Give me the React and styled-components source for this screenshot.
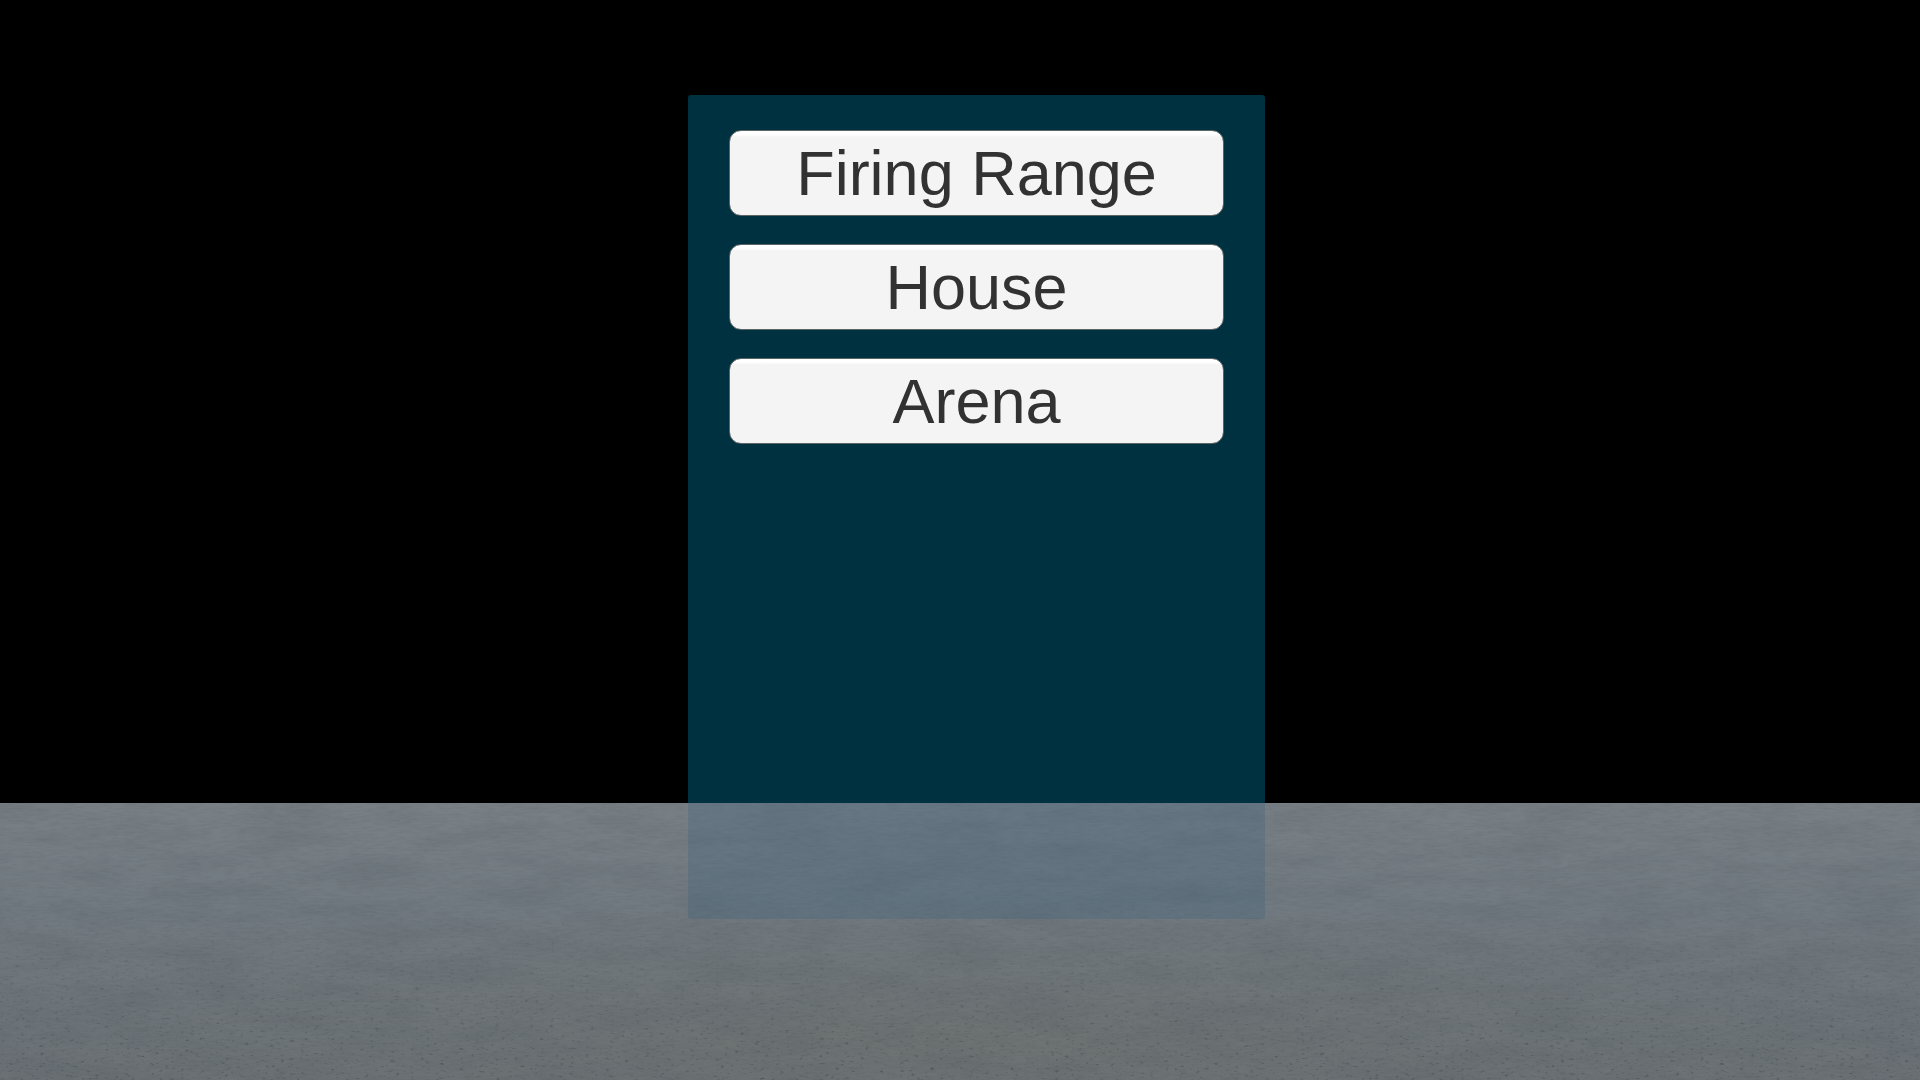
import React from "react";
import styled, { createGlobalStyle } from "styled-components";

const GlobalStyle = createGlobalStyle`
  body {
    margin: 0;
    background: #000;
  }
`;

/* Sky on the first row, ground on the second; the menu spans both. */
const Scene = styled.main`
  display: grid;
  grid-template-columns: 1fr;
  grid-template-rows: 803fr 277fr;
  height: 100vh;
  overflow: hidden;
  background: #000;
  font-family: "Liberation Sans", Arial, sans-serif;
`;

const Ground = styled.svg`
  grid-area: 2 / 1;
  display: block;
  width: 100%;
  height: 100%;
  min-height: 0;
`;

const Menu = styled.nav`
  grid-area: 1 / 1 / span 2;
  z-index: 1;
  justify-self: center;
  box-sizing: border-box;
  display: flex;
  flex-direction: column;
  gap: 28px;
  width: 577px;
  max-width: 100%;
  margin: 95px 0 161px 33px;
  padding: 35px 41px;
  border-radius: 3px;
  background: linear-gradient(
    #003140 calc(100% - 116px),
    rgba(60, 98, 124, 0.3) calc(100% - 116px)
  );
`;

const MapButton = styled.button`
  height: 86px;
  padding: 0;
  border: 1px solid #5c6464;
  border-radius: 12px;
  background: linear-gradient(#fff 3px, #f4f4f4 6px);
  color: #323232;
  font-family: inherit;
  font-size: 63px;
  line-height: 72px;
  text-align: center;
  cursor: pointer;
`;

const maps = ["Firing Range", "House", "Arena"];

function Asphalt() {
  return (
    <Ground aria-hidden="true">
      <defs>
        <linearGradient id="base" x1="0" y1="0" x2="0" y2="1">
          <stop offset="0" stopColor="#798187" />
          <stop offset="0.4" stopColor="#727a81" />
          <stop offset="1" stopColor="#6b7175" />
        </linearGradient>
        <radialGradient id="warm" cx="0.5" cy="0.85" r="0.5">
          <stop offset="0" stopColor="#6e7371" stopOpacity="0.7" />
          <stop offset="1" stopColor="#6e7371" stopOpacity="0" />
        </radialGradient>
        <linearGradient id="fade" x1="0" y1="0" x2="0" y2="1">
          <stop offset="0.3" stopColor="#000" />
          <stop offset="1" stopColor="#fff" />
        </linearGradient>
        <mask id="near">
          <rect width="100%" height="100%" fill="url(#fade)" />
        </mask>
        <filter id="patches" x="0" y="0" width="100%" height="100%" colorInterpolationFilters="sRGB">
          <feTurbulence type="fractalNoise" baseFrequency="0.012 0.05" numOctaves="3" seed="4" />
          <feColorMatrix values="0 0 0 0 0.32  0 0 0 0 0.35  0 0 0 0 0.38  0.4 0 0 0 -0.14" />
        </filter>
        <filter id="grain" x="0" y="0" width="100%" height="100%" colorInterpolationFilters="sRGB">
          <feTurbulence type="fractalNoise" baseFrequency="0.08 0.45" numOctaves="3" seed="9" />
          <feColorMatrix values="0 0 0 0 0.15  0 0 0 0 0.17  0 0 0 0 0.19  0.16 0 0 0 -0.06" />
        </filter>
        <filter id="specks" x="0" y="0" width="100%" height="100%" colorInterpolationFilters="sRGB">
          <feTurbulence type="fractalNoise" baseFrequency="0.2 0.4" numOctaves="2" seed="21" />
          <feColorMatrix values="0 0 0 0 0.16  0 0 0 0 0.2  0 0 0 0 0.21  1.6 0 0 0 -1" />
        </filter>
      </defs>
      <rect width="100%" height="100%" fill="url(#base)" />
      <rect width="100%" height="100%" fill="url(#warm)" />
      <rect width="100%" height="100%" filter="url(#patches)" />
      <rect width="100%" height="100%" filter="url(#grain)" />
      <g mask="url(#near)">
        <rect width="100%" height="100%" filter="url(#specks)" />
      </g>
    </Ground>
  );
}

export default function App() {
  return (
    <>
      <GlobalStyle />
      <Scene>
        <Asphalt />
        <Menu aria-label="Maps">
          {maps.map((name) => (
            <MapButton key={name} type="button">
              {name}
            </MapButton>
          ))}
        </Menu>
      </Scene>
    </>
  );
}
